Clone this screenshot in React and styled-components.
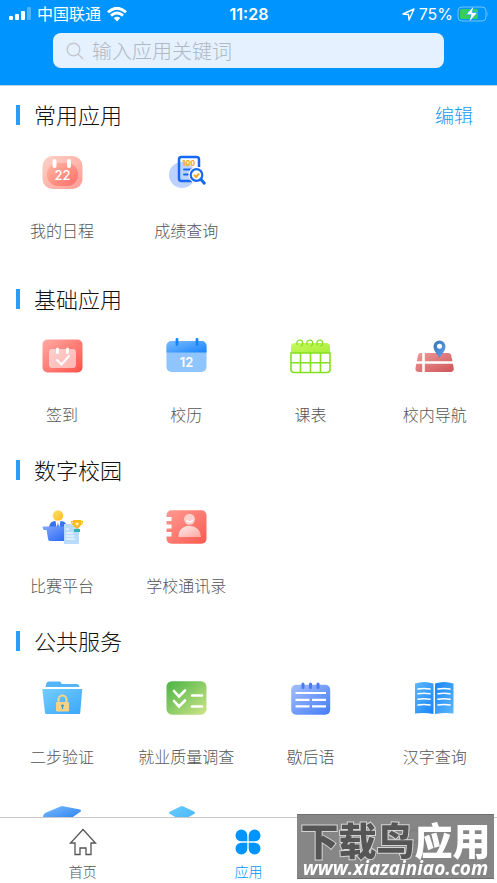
import React from "react";
import styled, { createGlobalStyle } from "styled-components";

const GlobalStyle = createGlobalStyle`
  * { box-sizing: border-box; }
  body {
    margin: 0;
    background: #fff;
    font-family: "Noto Sans CJK SC", "Noto Sans", sans-serif;
    font-weight: 300;
  }
  button, input { font-family: inherit; font-weight: inherit; }
  svg { display: block; }
`;

const Screen = styled.div`
  display: flex;
  flex-direction: column;
  height: 100vh;
  overflow: hidden;
`;

const Header = styled.header`
  flex: none;
  background: #0094ff;
  border-bottom: 1px solid #b9d3e8;
  padding-bottom: 17px;
`;

const StatusBar = styled.div`
  display: grid;
  grid-template-columns: 1fr auto 1fr;
  align-items: center;
  height: 28px;
  margin-bottom: 5px;
  padding: 0 8px 0 9px;
  color: #fff;
  font-size: 16px;
  line-height: 24px;
`;

const StatusGroup = styled.div`
  display: flex;
  align-items: center;
  gap: ${(p) => p.$gap}px;
  justify-content: ${(p) => (p.$end ? "flex-end" : "flex-start")};
`;

const Carrier = styled.span`
  padding-bottom: 2px;
  font-weight: 400;
`;

const Clock = styled.time`
  font-family: Inter, sans-serif;
  font-weight: 600;
`;

const Percent = styled.span`
  font-family: Inter, sans-serif;
  font-size: 16px;
  font-weight: 400;
`;

const SearchBox = styled.label`
  display: flex;
  align-items: center;
  gap: 8px;
  height: 35px;
  margin: 0 53px;
  padding: 0 13px;
  border-radius: 8px;
  background: #e5f1ff;
`;

const SearchInput = styled.input`
  flex: 1;
  min-width: 0;
  border: 0;
  padding: 0;
  outline: 0;
  background: transparent;
  color: #333;
  font-size: 20px;
  line-height: 30px;
  &::placeholder { color: #b0b8c3; opacity: 1; }
`;

const Content = styled.main`
  flex: 1;
  min-height: 0;
  overflow: hidden;
`;

const Section = styled.section`
  padding-bottom: ${(p) => (p.$spacious ? 29 : 16)}px;
`;

const SectionHeader = styled.div`
  display: flex;
  align-items: center;
  height: 57px;
  padding: 0 24px 0 16px;
`;

const Marker = styled.span`
  width: 4px;
  height: 20px;
  margin-right: 14px;
  background: #2b9df8;
`;

const SectionTitle = styled.h2`
  flex: 1;
  margin: 0;
  padding-bottom: 2px;
  color: #111;
  font-size: 22px;
  font-weight: inherit;
  line-height: 32px;
`;

const EditButton = styled.button`
  border: 0;
  padding: 0;
  background: none;
  color: #1b97f5;
  font-size: 19px;
  line-height: 28px;
`;

const AppGrid = styled.div`
  display: grid;
  grid-template-columns: repeat(4, 1fr);
  row-gap: 28px;
`;

const AppButton = styled.button`
  display: flex;
  flex-direction: column;
  align-items: center;
  gap: 27px;
  border: 0;
  padding: 9px 0 0;
  background: none;
  color: #555;
  font-size: 16px;
  line-height: 22px;
  white-space: nowrap;
`;

const TabBar = styled.nav`
  flex: none;
  display: grid;
  grid-template-columns: repeat(3, 1fr);
  height: 66px;
  border-top: 1px solid #c8c8c8;
  background: #fff;
`;

const Tab = styled.button`
  display: flex;
  flex-direction: column;
  align-items: center;
  gap: 5px;
  border: 0;
  padding: 10px 0 0;
  background: none;
  color: ${(p) => (p.$active ? "#0094ff" : "#555")};
  font-size: 14px;
  line-height: 20px;
`;

const Watermark = styled.div`
  position: fixed;
  right: 3px;
  bottom: 4px;
  width: 197px;
  height: 65px;
  border-top: 1px solid #6e6e6e;
  border-bottom: 1px solid #6e6e6e;
  background: rgba(128, 128, 128, 0.95);
  color: #fff;
  text-align: center;
  white-space: nowrap;
`;

const WatermarkName = styled.div`
  font-size: 38px;
  font-weight: 900;
  line-height: 40px;
  padding-top: 4px;
`;

const WatermarkDark = styled.span`
  color: #555;
  -webkit-text-stroke: 2px #d4d4d4;
  paint-order: stroke fill;
`;

const WatermarkUrl = styled.div`
  font-family: "Open Sans", sans-serif;
  font-size: 19px;
  font-style: italic;
  font-weight: 700;
  line-height: 18px;
`;

const Icon = ({ children }) => (
  <svg width="41" height="40" viewBox="0 0 41 40" fill="none" aria-hidden="true">
    {children}
  </svg>
);

const Gradient = ({ id, from, to }) => (
  <defs>
    <linearGradient id={id} x1="0" y1="0" x2="1" y2="1">
      <stop stopColor={from} />
      <stop offset="1" stopColor={to} />
    </linearGradient>
  </defs>
);

const ScheduleIcon = () => (
  <Icon>
    <Gradient id="sch" from="#fdd3c8" to="#ff9c95" />
    <Gradient id="schIn" from="#ffb8a4" to="#ff6d68" />
    <rect x="0.5" y="4" width="40" height="33" rx="10" fill="url(#sch)" />
    <rect x="5" y="11" width="31" height="23" rx="11" fill="url(#schIn)" />
    <rect x="10.500" y="7" width="4" height="9" rx="2" fill="#fff" />
    <rect x="25" y="7" width="4" height="9" rx="2" fill="#fff" />
    <text x="20.500" y="28" textAnchor="middle" fontFamily="Inter, sans-serif" fontSize="13" fontWeight="500" fill="#fff">22</text>
  </Icon>
);

const ScoreIcon = () => (
  <Icon>
    <circle cx="16" cy="23" r="13" fill="#bdd2ff" />
    <path d="M33 15V7.500a2.500 2.500 0 0 0-2.500-2.500h-15A2.500 2.500 0 0 0 13 7.500v19a2.500 2.500 0 0 0 2.500 2.500H26" stroke="#1769f5" strokeWidth="2.500" />
    <text x="22.700" y="14" textAnchor="middle" fontFamily="Inter, sans-serif" fontSize="7" fontWeight="800" fill="#f9a825">100</text>
    <path d="M18 17.500h7M18 22.500h4" stroke="#1769f5" strokeWidth="2" strokeLinecap="round" />
    <circle cx="30.500" cy="23" r="8" fill="#fff" />
    <circle cx="30.500" cy="23" r="5.800" fill="#fff" stroke="#1769f5" strokeWidth="2.200" />
    <path d="m35 27.500 3.300 3.700" stroke="#1769f5" strokeWidth="3" strokeLinecap="round" />
    <path d="m28 23 2 2 3.200-3.500" stroke="#f9a825" strokeWidth="2" />
  </Icon>
);

const CheckInIcon = () => (
  <Icon>
    <Gradient id="chk" from="#ffaaa4" to="#fb5148" />
    <rect x="0.500" y="3.500" width="40" height="33" rx="5" fill="url(#chk)" />
    <rect x="7" y="13" width="27" height="19" rx="3" fill="#fff" opacity="0.550" />
    <path d="M15.500 13v3.500M25.500 13v3.500" stroke="#fff" strokeWidth="3" strokeLinecap="round" />
    <path d="m15 24 4.500 4.500 7.500-8.500" stroke="#fff" strokeWidth="2" strokeLinecap="round" />
  </Icon>
);

const CalendarIcon = () => (
  <Icon>
    <Gradient id="cal" from="#7ebcff" to="#1585fb" />
    <rect x="0.500" y="5" width="40" height="31" rx="5" fill="#90c4fc" />
    <path d="M.5 16.500V10a5 5 0 0 1 5-5h30a5 5 0 0 1 5 5v6.500z" fill="url(#cal)" />
    <path d="M11 3.500v5M31 3.500v5" stroke="#1585fb" strokeWidth="2.800" strokeLinecap="round" />
    <text x="20.500" y="31" textAnchor="middle" fontFamily="Inter, sans-serif" fontSize="13" fontWeight="600" fill="#fff">12</text>
  </Icon>
);

const TimetableIcon = () => (
  <Icon>
    <Gradient id="tt" from="#c8f95c" to="#a8ed39" />
    <path d="M1 17v-6a4 4 0 0 1 4-4h31a4 4 0 0 1 4 4v6z" fill="url(#tt)" />
    <path d="M1 17v16.500a3 3 0 0 0 3 3h33a3 3 0 0 0 3-3V17zM10.500 17v19M20.500 17v19M30.500 17v19M1 26.700h39" stroke="#83df22" strokeWidth="1.600" />
    <path d="M7.500 9a3 3 0 1 1 3 1M17.500 9a3 3 0 1 1 3 1M27.500 9a3 3 0 1 1 3 1" stroke="#83df22" strokeWidth="1.300" />
  </Icon>
);

const MapIcon = () => (
  <Icon>
    <Gradient id="map" from="#ef9a9a" to="#cd5558" />
    <Gradient id="pin" from="#3474b8" to="#67a2ee" />
    <path d="M6.500 17h28q2 0 2.700 2l2.500 13q.5 4-3.500 4H5q-4 0-3.500-4L4 19q.5-2 2.500-2z" fill="url(#map)" />
    <path d="M9.500 17v19M1 26.500h39" stroke="#fff" strokeWidth="2.600" />
    <path d="M25.500 22.500c-1-3.500-6-7-6-12a6 6 0 0 1 12 0c0 5-5 8.500-6 12z" fill="url(#pin)" />
    <circle cx="25.500" cy="10.300" r="2.500" fill="#fff" />
  </Icon>
);

const ContestIcon = () => (
  <Icon>
    <Gradient id="head" from="#ffe173" to="#fcb91d" />
    <Gradient id="desk" from="#83a9ff" to="#2767f3" />
    <circle cx="16" cy="8.500" r="5.300" fill="url(#head)" />
    <path d="M7 20q1-6 6-6h6q5 0 6 6z" fill="#3472ee" />
    <path d="M13.500 14h5l-1 6h-3z" fill="#fff" />
    <path d="m16 15-1 5h2z" fill="#3472ee" />
    <path d="M.5 19.500H24V34H8q-1.500 0-1.800-1.500L4.500 23H2q-1 0-1.500-3.500z" fill="url(#desk)" />
    <path d="M22 17h15v20H22z" fill="#b9dcfe" />
    <path d="M24 22h3M24 26h7M24 29h8M24 32h9" stroke="#fff" strokeWidth="1.200" />
    <path d="M32 14.500h-2.500q.3 3.500 4 4M38 14.500h2.500q-.3 3.500-4 4" stroke="#f8bb23" strokeWidth="1.200" />
    <path d="M31 13h8v4q-.5 3-3.300 4v2h-1.400v-2Q31.500 20 31 17z" fill="#fcb91d" />
    <path d="m35 14.700.7 1.300 1.500.2-1.100 1 .3 1.500-1.400-.7-1.400.7.3-1.500-1.100-1 1.500-.2z" fill="#fff1b8" />
    <rect x="32" y="22" width="6" height="3" rx="0.500" fill="#2bb5af" />
  </Icon>
);

const ContactsIcon = () => (
  <Icon>
    <Gradient id="con" from="#ff9b92" to="#f95a51" />
    <Gradient id="per" from="#fff" to="#ffb3ae" />
    <rect x="0.500" y="3.200" width="40" height="33.500" rx="5" fill="url(#con)" />
    <path d="M0 10h5.500v4H0zM0 17.500h5.500v4H0zM0 25h5.500v4.500H0z" fill="#fff" />
    <circle cx="23.500" cy="12.300" r="5.500" fill="#ffcfcc" />
    <path d="M20.800 13.500q2.700 3 5.400 0" stroke="#fff" strokeWidth="1.400" strokeLinecap="round" />
    <path d="M12.500 30q0-10.500 11-11.300 11 .8 11.500 11.300z" fill="url(#per)" opacity="0.850" />
  </Icon>
);

const FolderLockIcon = () => (
  <Icon>
    <Gradient id="fol" from="#75cdff" to="#3aa7fb" />
    <path d="M3.500 9 4.500 5q.5-1.500 2-1.500h11q1 0 1.500 1l.7 1.500H35q2 0 2.500 3z" fill="#54b5f8" />
    <path d="M.3 11h40L38.200 35q0 1-1 1H4q-1 0-1-1z" fill="url(#fol)" />
    <path d="M16.500 25v-3.500a4 4 0 0 1 8 0V25" stroke="#f4d386" strokeWidth="2.200" />
    <rect x="14" y="24" width="13" height="9.500" rx="1" fill="#f4d386" />
    <circle cx="20.500" cy="27.700" r="1.300" fill="#3990ce" />
    <path d="M20.500 28v3" stroke="#3990ce" strokeWidth="1.200" />
  </Icon>
);

const SurveyIcon = () => (
  <Icon>
    <Gradient id="sur" from="#4ab344" to="#cee58a" />
    <rect x="0.500" y="3.200" width="40" height="33.500" rx="5.500" fill="url(#sur)" />
    <path d="m8 13 5 5.500 6-6M8 23l5 5.500 6-6M26 17.500h10M26 28.500h10" stroke="#fff" strokeWidth="2.600" strokeLinecap="round" />
  </Icon>
);

const NotebookIcon = () => (
  <Icon>
    <Gradient id="note" from="#a5befc" to="#437cf8" />
    <rect x="1.200" y="6.700" width="39" height="30" rx="5" fill="url(#note)" />
    <path d="M13 6v3.500M20.500 6v3.500M28 6v3.500" stroke="#4a79f5" strokeWidth="3" strokeLinecap="round" />
    <path d="M5.500 15H36M5.500 21.800h14M22 21.800h14M5.500 28.400h14M22 28.400h14" stroke="#fff" strokeWidth="2.200" />
  </Icon>
);

const BookIcon = () => (
  <Icon>
    <Gradient id="book" from="#5db8fb" to="#1684fa" />
    <Gradient id="bookR" from="#1684fa" to="#5db8fb" />
    <path d="M1 5.500q9-3 18.500 0V36q-9-1.500-18.500-.5z" fill="url(#book)" />
    <path d="M21 5.500q9-3 18.500 0v30q-9-1-18.500.5z" fill="url(#bookR)" />
    <path d="M4 11q6-1 12 0M4 15.700q6-1 12 0M4 21.300q6-1 12 0M4 27q6-1 12 0M24 11q6-1 12 0M24 15.700q6-1 12 0M24 21.300q6-1 12 0M24 27q6-1 12 0" stroke="#fff" strokeWidth="1.600" strokeLinecap="round" />
  </Icon>
);

const CapIcon = () => (
  <Icon>
    <Gradient id="cap" from="#7dbcff" to="#267fef" />
    <path d="M3 9 18.500 2.500q2-.8 4 0L38 5.500q2 1 0 2.500L28 15 1.500 16q-1.500-5 1.500-7z" fill="url(#cap)" />
  </Icon>
);

const LayersIcon = () => (
  <Icon>
    <Gradient id="lay" from="#6accfc" to="#47b5fa" />
    <path d="M14.500 2.500q1.500-1 3 0L28 7.500q2 1.200 0 2.500l-10.500 6q-1.500.8-3 0L4 10q-2-1.300 0-2.500z" fill="url(#lay)" />
  </Icon>
);

const SignalIcon = () => (
  <svg width="22" height="14" viewBox="0 0 22 14" fill="#fff" aria-hidden="true">
    <rect y="9" width="4" height="4" rx="1" />
    <rect x="6" y="7" width="4" height="6" rx="1" />
    <rect x="12" y="4" width="4" height="9" rx="1" />
    <rect x="18" width="4" height="13" rx="1" opacity="0.300" />
  </svg>
);

const WifiIcon = () => (
  <svg width="20" height="15" viewBox="0 0 20 15" fill="none" stroke="#fff" aria-hidden="true">
    <path d="M1 5.200q9-8 18 0M4 8.600q6-5.300 12 0" strokeWidth="2.800" />
    <path d="M6.700 11q3.300-2.500 6.600 0L10 14.500z" fill="#fff" stroke="none" />
  </svg>
);

const LocationIcon = () => (
  <svg width="13" height="13" viewBox="0 0 13 13" fill="none" aria-hidden="true">
    <path d="M1 6 12 1 7 12 6.500 6.500z" stroke="#fff" strokeWidth="1.400" strokeLinejoin="round" />
  </svg>
);

const BatteryIcon = () => (
  <svg width="32" height="18" viewBox="0 0 32 18" fill="none" aria-hidden="true">
    <rect x="1" y="2" width="28" height="14" rx="4" stroke="#73c3ff" />
    <path d="M30.500 6.500q1.500 2.500 0 5z" fill="#73c3ff" />
    <rect x="3" y="4" width="18" height="10" rx="2" fill="#36cf5c" />
    <path d="m17 .5-8 9.200h5L12 17.500l8.500-10h-5.300z" fill="#fff" stroke="#0094ff" strokeWidth="0.600" />
  </svg>
);

const SearchIcon = () => (
  <svg width="18" height="18" viewBox="0 0 18 18" fill="none" stroke="#c6c7ca" strokeWidth="1.400" aria-hidden="true">
    <circle cx="7.500" cy="7.500" r="6.300" />
    <path d="m12 12 5 5" />
  </svg>
);

const HomeIcon = () => (
  <svg width="28" height="28" viewBox="0 0 28 28" fill="none" stroke="#555" strokeWidth="1.300" aria-hidden="true">
    <path d="M14 1.500 26.500 15H22v11.500h-5V20h-6v6.500H6V15H1.500z" />
  </svg>
);

const CloverIcon = () => (
  <svg width="28" height="28" viewBox="0 0 28 28" fill="#0094ff" aria-hidden="true">
    <path d="M13.300 13.300H7.500a5.900 5.900 0 1 1 5.800-5.900zM14.700 13.300h5.800a5.900 5.900 0 1 0-5.800-5.900zM13.300 14.700H7.500a5.900 5.900 0 1 0 5.800 5.900zM14.700 14.700h5.800a5.900 5.900 0 1 1-5.800 5.900z" />
  </svg>
);

const ProfileIcon = () => (
  <svg width="28" height="28" viewBox="0 0 28 28" fill="none" stroke="#555" strokeWidth="1.300" aria-hidden="true">
    <circle cx="14" cy="8" r="6" />
    <path d="M3 26q0-11 11-11t11 11z" />
  </svg>
);

const sections = [
  {
    title: "常用应用",
    editable: true,
    apps: [
      ["我的日程", ScheduleIcon],
      ["成绩查询", ScoreIcon],
    ],
  },
  {
    title: "基础应用",
    apps: [
      ["签到", CheckInIcon],
      ["校历", CalendarIcon],
      ["课表", TimetableIcon],
      ["校内导航", MapIcon],
    ],
  },
  {
    title: "数字校园",
    apps: [
      ["比赛平台", ContestIcon],
      ["学校通讯录", ContactsIcon],
    ],
  },
  {
    title: "公共服务",
    apps: [
      ["二步验证", FolderLockIcon],
      ["就业质量调查", SurveyIcon],
      ["歇后语", NotebookIcon],
      ["汉字查询", BookIcon],
      ["", CapIcon],
      ["", LayersIcon],
    ],
  },
];

const tabs = [
  ["首页", HomeIcon],
  ["应用", CloverIcon],
  ["我的", ProfileIcon],
];

export default function App() {
  return (
    <>
      <GlobalStyle />
      <Screen>
        <Header>
          <StatusBar>
            <StatusGroup $gap={6}>
              <SignalIcon />
              <Carrier>中国联通</Carrier>
              <WifiIcon />
            </StatusGroup>
            <Clock>11:28</Clock>
            <StatusGroup $gap={4} $end>
              <LocationIcon />
              <Percent>75%</Percent>
              <BatteryIcon />
            </StatusGroup>
          </StatusBar>
          <SearchBox>
            <SearchIcon />
            <SearchInput type="text" placeholder="输入应用关键词" aria-label="输入应用关键词" />
          </SearchBox>
        </Header>
        <Content>
          {sections.map(({ title, editable, apps }) => (
            <Section key={title} $spacious={editable}>
              <SectionHeader>
                <Marker />
                <SectionTitle>{title}</SectionTitle>
                {editable && <EditButton type="button">编辑</EditButton>}
              </SectionHeader>
              <AppGrid>
                {apps.map(([name, Glyph], i) => (
                  <AppButton key={i} type="button">
                    <Glyph />
                    {name && <span>{name}</span>}
                  </AppButton>
                ))}
              </AppGrid>
            </Section>
          ))}
        </Content>
        <TabBar>
          {tabs.map(([name, Glyph]) => (
            <Tab key={name} type="button" $active={name === "应用"}>
              <Glyph />
              <span>{name}</span>
            </Tab>
          ))}
        </TabBar>
      </Screen>
      <Watermark>
        <WatermarkName>
          <WatermarkDark>下载鸟</WatermarkDark>应用
        </WatermarkName>
        <WatermarkUrl>www.xiazainiao.com</WatermarkUrl>
      </Watermark>
    </>
  );
}
